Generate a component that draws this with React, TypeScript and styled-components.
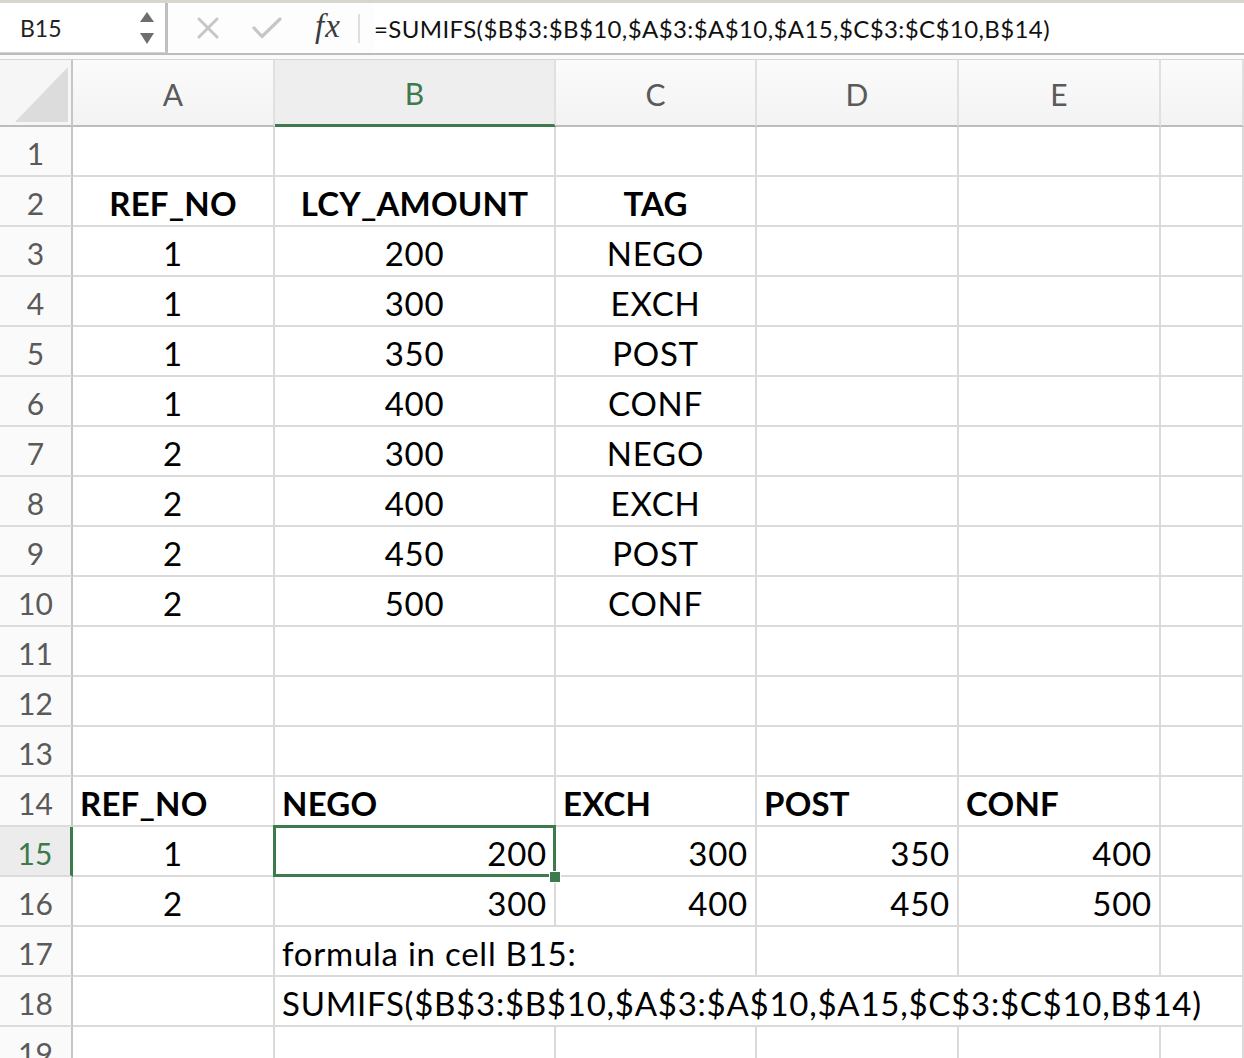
import React from 'react';
import styled, { createGlobalStyle } from 'styled-components';

const GREEN = '#3d7a4e';
const GRID = '#dadada';

const GlobalStyle = createGlobalStyle`
  html, body {
    margin: 0;
    padding: 0;
    background: #ffffff;
    overflow: hidden;
  }
  body {
    font-family: Lato, "Noto Sans", sans-serif;
  }
`;

const Page = styled.div`
  width: 1244px;
  height: 1058px;
  overflow: hidden;
  background: #ffffff;
`;

// ---- formula bar ----

const FormulaBar = styled.div`
  display: flex;
  align-items: stretch;
  height: 55px;
  box-sizing: border-box;
  border-top: 3px solid #d8d5cf;
  border-bottom: 2px solid #bcbcbc;
  background: #fdfdfd;
`;

const NameBox = styled.div`
  display: flex;
  align-items: center;
  justify-content: space-between;
  width: 168px;
  box-sizing: border-box;
  padding: 0 10px 0 20px;
  background: #ffffff;
  border-right: 3px solid #bfbfbf;
  border-bottom: 1px solid #d2d2d2;
  font-size: 23px;
  color: #222222;
`;

const ToolSlot = styled.div<{ $gap: number; $width: number }>`
  display: flex;
  align-items: center;
  justify-content: center;
  margin-left: ${p => p.$gap}px;
  width: ${p => p.$width}px;
`;

const Fx = styled.span`
  font-family: "Liberation Serif", "DejaVu Serif", serif;
  font-style: italic;
  font-size: 33px;
  color: #3c3c3c;
  line-height: 1;
  margin-top: -4px;
  letter-spacing: 1px;
`;

const BarSeparator = styled.div`
  width: 2px;
  height: 29px;
  margin-left: 15px;
  align-self: center;
  background: #dedede;
`;

const FormulaText = styled.div`
  display: flex;
  align-items: center;
  flex: 1;
  margin-left: 14px;
  padding-top: 1px;
  background: #ffffff;
  font-size: 24px;
  letter-spacing: 0.4px;
  color: #111111;
  white-space: nowrap;
`;

const BarGap = styled.div`
  height: 4px;
  background: #fafafa;
`;

// ---- sheet ----

const COLUMNS = '73px 202px 281px 201px 202px 202px 1fr';

const Row = styled.div<{ $height: number }>`
  display: grid;
  grid-template-columns: ${COLUMNS};
  height: ${p => p.$height}px;
`;

const Corner = styled.div`
  display: flex;
  box-sizing: border-box;
  background: #f6f6f6;
  border-top: 1px solid #d6d6d6;
  border-right: 2px solid #c6c6c6;
  border-bottom: 2px solid #bcbcbc;
`;

const ColHead = styled.div<{ $active?: boolean }>`
  display: flex;
  align-items: flex-end;
  justify-content: center;
  box-sizing: border-box;
  padding-bottom: 13px;
  background: ${p =>
    p.$active ? '#eeeeee' : 'linear-gradient(#fbfbfb, #f3f3f3)'};
  border-top: 1px solid #d6d6d6;
  border-right: 2px solid #e0e0e0;
  border-bottom: ${p => (p.$active ? `3px solid ${GREEN}` : '2px solid #bcbcbc')};
  font-size: 30px;
  line-height: 35px;
  color: ${p => (p.$active ? GREEN : '#5a5a5a')};
`;

const RowHead = styled.div<{ $active?: boolean }>`
  display: flex;
  align-items: flex-end;
  justify-content: center;
  box-sizing: border-box;
  padding-bottom: 4px;
  background: ${p => (p.$active ? '#ececec' : '#fafafa')};
  border-right: ${p => (p.$active ? `3px solid ${GREEN}` : '2px solid #c6c6c6')};
  border-bottom: 2px solid #dcdcdc;
  font-size: 30px;
  line-height: 35px;
  color: ${p => (p.$active ? GREEN : '#5a5a5a')};
`;

type Align = 'left' | 'center' | 'right';

const Cell = styled.div<{ $align: Align; $bold?: boolean; $span?: number; $selected?: boolean }>`
  position: relative;
  z-index: ${p => (p.$selected ? 2 : 'auto')};
  display: flex;
  align-items: flex-end;
  justify-content: ${p =>
    p.$align === 'left' ? 'flex-start' : p.$align === 'right' ? 'flex-end' : 'center'};
  grid-column: ${p => (p.$span ? `span ${p.$span}` : 'auto')};
  box-sizing: border-box;
  padding: 0 7px 3px 7px;
  border-right: 2px solid ${GRID};
  border-bottom: 2px solid ${GRID};
  font-size: 33px;
  letter-spacing: ${p => (p.$bold ? '0.2px' : '0.75px')};
  line-height: 38px;
  font-weight: ${p => (p.$bold ? 700 : 400)};
  color: #000000;
  white-space: nowrap;
  overflow: visible;
`;

// green frame round the active cell, drawn over the grid lines
const SelectionFrame = styled.span`
  position: absolute;
  left: -2px;
  top: -2px;
  right: -2px;
  bottom: -2px;
  border: 3px solid ${GREEN};
  pointer-events: none;
`;

const FillHandle = styled.span`
  position: absolute;
  right: -6px;
  bottom: -7px;
  width: 10px;
  height: 10px;
  background: ${GREEN};
  box-shadow: 0 0 0 1px #ffffff;
`;

type CellData = {
  text: string;
  align?: Align;
  bold?: boolean;
  span?: number;
  selected?: boolean;
};

const plain = (text: string, align: Align = 'center'): CellData => ({ text, align });
const bold = (text: string, align: Align = 'center'): CellData => ({ text, align, bold: true });
const blank: CellData = { text: '' };

const empty = () => [blank, blank, blank, blank, blank, blank];

const tagRows: [string, string, string][] = [
  ['1', '200', 'NEGO'],
  ['1', '300', 'EXCH'],
  ['1', '350', 'POST'],
  ['1', '400', 'CONF'],
  ['2', '300', 'NEGO'],
  ['2', '400', 'EXCH'],
  ['2', '450', 'POST'],
  ['2', '500', 'CONF'],
];

const sheet: CellData[][] = [
  empty(),
  [bold('REF_NO'), bold('LCY_AMOUNT'), bold('TAG'), blank, blank, blank],
  ...tagRows.map(([ref, amount, tag]) => [
    plain(ref),
    plain(amount),
    plain(tag),
    blank,
    blank,
    blank,
  ]),
  empty(),
  empty(),
  empty(),
  [
    bold('REF_NO', 'left'),
    bold('NEGO', 'left'),
    bold('EXCH', 'left'),
    bold('POST', 'left'),
    bold('CONF', 'left'),
    blank,
  ],
  [
    plain('1'),
    { text: '200', align: 'right', selected: true },
    plain('300', 'right'),
    plain('350', 'right'),
    plain('400', 'right'),
    blank,
  ],
  [
    plain('2'),
    plain('300', 'right'),
    plain('400', 'right'),
    plain('450', 'right'),
    plain('500', 'right'),
    blank,
  ],
  [blank, { text: 'formula in cell B15:', align: 'left', span: 2 }, blank, blank, blank],
  [
    blank,
    {
      text: 'SUMIFS($B$3:$B$10,$A$3:$A$10,$A15,$C$3:$C$10,B$14)',
      align: 'left',
      span: 5,
    },
  ],
  empty(),
];

const COLUMN_LETTERS = ['A', 'B', 'C', 'D', 'E', ''];

const Stepper = () => (
  <svg width="16" height="34" viewBox="0 0 16 34">
    <polygon points="8,1 15,11 1,11" fill="#6e6e6e" />
    <polygon points="1,22 15,22 8,33" fill="#6e6e6e" />
  </svg>
);

const CancelIcon = () => (
  <svg width="22" height="22" viewBox="0 0 22 22">
    <path d="M2 2 L20 20 M20 2 L2 20" stroke="#c6c6c6" strokeWidth="3" strokeLinecap="round" />
  </svg>
);

const EnterIcon = () => (
  <svg width="30" height="22" viewBox="0 0 30 22">
    <path
      d="M2 11 L10 19.5 L28 2"
      stroke="#c6c6c6"
      strokeWidth="3.2"
      fill="none"
      strokeLinecap="round"
      strokeLinejoin="round"
    />
  </svg>
);

const App = () => {
  return (
    <Page>
      <GlobalStyle />
      <FormulaBar>
        <NameBox>
          <span>B15</span>
          <Stepper />
        </NameBox>
        <ToolSlot $gap={29} $width={22}>
          <CancelIcon />
        </ToolSlot>
        <ToolSlot $gap={33} $width={30}>
          <EnterIcon />
        </ToolSlot>
        <ToolSlot $gap={31} $width={30}>
          <Fx>fx</Fx>
        </ToolSlot>
        <BarSeparator />
        <FormulaText>=SUMIFS($B$3:$B$10,$A$3:$A$10,$A15,$C$3:$C$10,B$14)</FormulaText>
      </FormulaBar>
      <BarGap />

      <Row $height={68}>
        <Corner>
          <svg width="71" height="65" viewBox="0 0 71 65">
            <polygon points="68,7 68,62 15,62" fill="#dcdcdc" />
          </svg>
        </Corner>
        {COLUMN_LETTERS.map((letter, i) => (
          <ColHead key={i} $active={letter === 'B'}>
            {letter}
          </ColHead>
        ))}
      </Row>

      {sheet.map((cells, r) => (
        <Row key={r} $height={50}>
          <RowHead $active={r === 14}>{r + 1}</RowHead>
          {cells.map((c, i) => (
            <Cell
              key={i}
              $align={c.align ?? 'center'}
              $bold={c.bold}
              $span={c.span}
              $selected={c.selected}
            >
              {c.text}
              {c.selected && (
                <>
                  <SelectionFrame />
                  <FillHandle />
                </>
              )}
            </Cell>
          ))}
        </Row>
      ))}
    </Page>
  );
};

export default App;
